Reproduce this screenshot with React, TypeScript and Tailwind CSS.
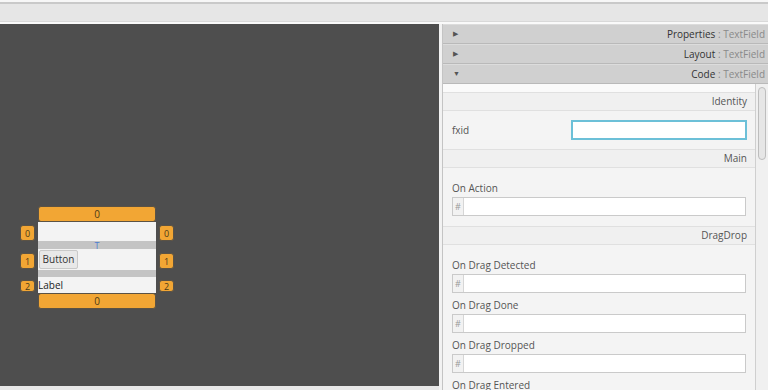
import React from 'react'

const font = { fontFamily: '"Open Sans", "Noto Sans", sans-serif' }

const Badge = ({ n, h }: { n: string; h: string }) => (
  <div
    className={`w-[15px] ${h} rounded-[3px] border border-[#5b5244] bg-[#f2a634] flex items-center justify-center text-[9px] leading-none text-[#4a3a18]`}
  >
    {n}
  </div>
)

const Header = ({ title, open }: { title: string; open?: boolean }) => (
  <div className="h-[20px] flex items-center justify-between pl-[10px] pr-[3px] bg-[#d0d0d0] border-b border-[#b9b9b9] border-t border-t-[#dcdcdc]">
    <span className="text-[7px] text-[#555]">{open ? '▼' : '▶'}</span>
    <span className="text-[10px] text-[#333]">
      {title} <span className="text-[#8a8a8a]">: TextField</span>
    </span>
  </div>
)

const Section = ({ title }: { title: string }) => (
  <div className="h-[19px] flex items-center justify-end pr-[8px] bg-[#f0f0f0] border-y border-[#e0e0e0] text-[10px] text-[#555]">
    {title}
  </div>
)

const HashInput = () => (
  <div className="flex h-[19px] mx-[9px] border border-[#cacaca] bg-white">
    <div className="w-[11px] flex items-center justify-center text-[9px] text-[#999] bg-[#f2f2f2] border-r border-[#d6d6d6]">#</div>
    <div className="flex-1" />
  </div>
)

const Field = ({ label, first }: { label: string; first?: boolean }) => (
  <div className={first ? 'pt-[12px]' : 'pt-[4px]'}>
    <div className="pl-[9px] text-[10px] text-[#555] h-[17px] leading-[17px] whitespace-nowrap">{label}</div>
    <HashInput />
  </div>
)

const App = () => {
  return (
    <div className="w-[768px] h-[390px] overflow-hidden bg-[#f4f4f4] flex flex-col" style={font}>
      <div className="h-[2px] bg-[#f7f7f7]" />
      <div className="h-[2px] bg-[#c9c9c9]" />
      <div className="h-[18px] bg-[#e6e6e6] border-b border-[#d9d9d9]" />
      <div className="h-[2px] bg-[#fafafa]" />
      <div className="flex-1 flex min-h-0">
        <div className="w-[439px] flex flex-col">
          <div className="flex-1 bg-[#4e4e4e] pl-[20px] pt-[182px]">
            <div className="flex items-start gap-[3px]">
              <div className="flex flex-col pt-[19px]">
                <Badge n="0" h="h-[16px]" />
                <div className="h-[12px]" />
                <Badge n="1" h="h-[16px]" />
                <div className="h-[11px]" />
                <Badge n="2" h="h-[12px]" />
              </div>
              <div className="w-[118px] flex flex-col">
                <div className="h-[16px] rounded-[3px] border border-[#5b5244] bg-[#f2a634] flex items-center justify-center text-[10px] text-[#4a3a18]">0</div>
                <div className="h-[19px] bg-[#f3f3f3]" />
                <div className="h-[8px] bg-[#c4c4c4] flex items-center justify-center text-[9px] leading-none text-[#4f7fd0]">T</div>
                <div className="h-[21px] bg-[#f3f3f3] flex items-center pl-px">
                  <div className="h-[19px] w-[39px] border border-[#c9c9c9] rounded-[2px] bg-[#e8e8e8] flex items-center justify-center text-[10px] text-[#333]">Button</div>
                </div>
                <div className="h-[7px] bg-[#c4c4c4]" />
                <div className="h-[16px] bg-[#f3f3f3] flex items-center text-[10px] text-[#222]">Label</div>
                <div className="h-[16px] rounded-[3px] border border-[#5b5244] bg-[#f2a634] flex items-center justify-center text-[10px] text-[#4a3a18]">0</div>
              </div>
              <div className="flex flex-col pt-[19px]">
                <Badge n="0" h="h-[16px]" />
                <div className="h-[12px]" />
                <Badge n="1" h="h-[16px]" />
                <div className="h-[11px]" />
                <Badge n="2" h="h-[12px]" />
              </div>
            </div>
          </div>
          <div className="h-[4px] bg-[#e8e8e8]" />
        </div>
        <div className="w-[4px] bg-[#f2f2f2] border-r border-[#c4c4c4]" />
        <div className="flex-1 flex flex-col min-w-0">
          <Header title="Properties" />
          <Header title="Layout" />
          <Header title="Code" open />
          <div className="flex-1 flex min-h-0">
            <div className="flex-1 bg-[#f4f4f4] border-r border-[#cfcfcf] overflow-hidden">
              <div className="h-[8px] bg-[#fafafa]" />
              <Section title="Identity" />
              <div className="h-[38px] flex items-center justify-between pl-[9px] pr-[8px]">
                <span className="text-[10px] text-[#555]">fxid</span>
                <div className="w-[176px] h-[20px] bg-white border-2 border-[#6cc0d8]" />
              </div>
              <Section title="Main" />
              <Field label="On Action" first />
              <div className="h-[10px]" />
              <Section title="DragDrop" />
              <Field label="On Drag Detected" first />
              <Field label="On Drag Done" />
              <Field label="On Drag Dropped" />
              <Field label="On Drag Entered" />
            </div>
            <div className="w-[12px] bg-[#f0f0f0] pt-[3px] flex justify-center">
              <div className="w-[8px] h-[73px] rounded-[4px] bg-[#e6e6e6] border border-[#bdbdbd]" />
            </div>
          </div>
        </div>
      </div>
    </div>
  )
}

export default App
